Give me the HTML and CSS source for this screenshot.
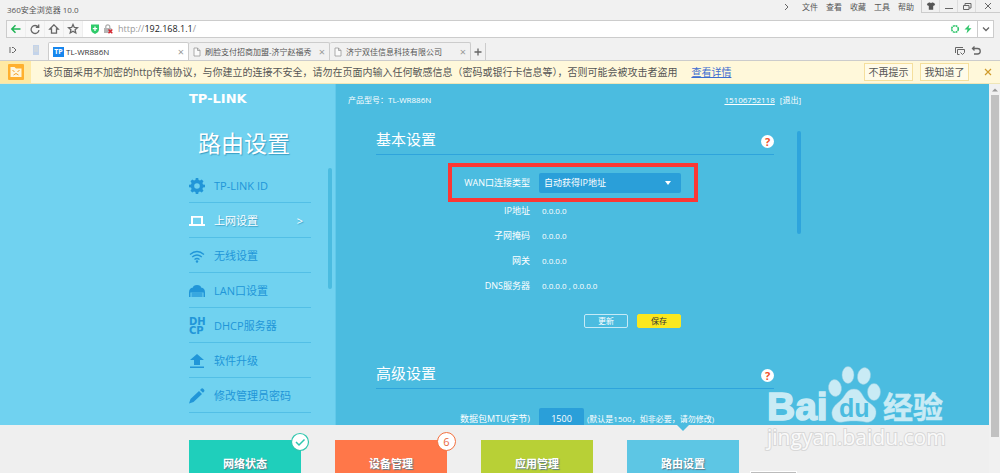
FILE: index.html
```html
<!DOCTYPE html>
<html lang="zh-CN">
<head>
<meta charset="utf-8">
<title>TL-WR886N</title>
<link rel="stylesheet" href="styles.css">
</head>
<body>
<header class="chrome">
  <div class="titlebar">
    <span class="app-name">360安全浏览器 10.0</span>
    <nav class="app-menu">
      <svg class="ico-6" viewBox="0 0 6 8"><path d="M1 1l3 3-3 3" class="line"/></svg>
      <button>文件</button><button>查看</button><button>收藏</button><button>工具</button><button>帮助</button>
    </nav>
    <div class="window-buttons">
      <button aria-label="皮肤"><svg viewBox="0 0 10 10" class="ico-10"><path d="M3 1.500h1l1 .8 1-.8h1L9.200 3 8 5l-.8-.5v4.200H2.800V4.500L2 5 .8 3z" fill="#555"/></svg></button>
      <button aria-label="最小化"><svg viewBox="0 0 10 10" class="ico-10"><path d="M1 7.500h8" class="line"/></svg></button>
      <button aria-label="还原"><svg viewBox="0 0 10 10" class="ico-10"><path d="M1.500 4.500h5.500v4H1.500zM3 4.500V2.500h6v4.500H7" class="line"/></svg></button>
      <button aria-label="关闭"><svg viewBox="0 0 10 10" class="ico-10"><path d="M2 2l6 6M8 2L2 8" class="line"/></svg></button>
    </div>
  </div>
  <div class="addressbar">
    <button class="nav-btn" aria-label="后退"><svg viewBox="0 0 12 12" class="ico-12"><path d="M10.500 6H2M5.500 2.200L1.800 6l3.700 3.800" fill="none" stroke="#1fb455" stroke-width="1.500"/></svg></button>
    <button class="nav-btn" aria-label="刷新"><svg viewBox="0 0 12 12" class="ico-12"><path d="M9.200 4A4 4 0 1 0 10 7.200M9.700 1.500v2.900H6.800" class="line thick"/></svg></button>
    <button class="nav-btn" aria-label="主页"><svg viewBox="0 0 12 12" class="ico-12"><path d="M6 1.800L1.800 6h1.700v4.200h5V6h1.700z" class="line thick"/></svg></button>
    <button class="nav-btn" aria-label="收藏"><svg viewBox="0 0 12 12" class="ico-12"><path d="M6 1.500l1.300 2.900 3.200.3-2.400 2.100.7 3.200L6 8.300 3.200 10l.7-3.200L1.500 4.700l3.200-.3z" class="line thick"/></svg></button>
    <svg viewBox="0 0 10 12" class="shield"><path d="M1 1.500h8v5C9 9 6.500 10.300 5 11 3.500 10.300 1 9 1 6.500z" fill="#2fcb6a"/><path d="M5 3.500v4.500M2.800 5.700h4.400" stroke="#fff" stroke-width="1.300"/></svg>
    <svg viewBox="0 0 10 12" class="shield"><path d="M2.800 5V3.800a2 2 0 0 1 4 0V5" fill="none" stroke="#aaa" stroke-width="1.200"/><path d="M1 5h7.500v5H1z" fill="#b5b5b5"/><path d="M5.500 6.500l3.800 3.800m0-3.800l-3.800 3.800" stroke="#d9232e" stroke-width="1.400"/></svg>
    <span class="url">http://<b>192.168.1.1</b>/</span>
    <svg viewBox="0 0 10 10" class="ico-10"><circle cx="5" cy="5" r="3.300" fill="none" stroke="#2fc56a" stroke-width="1.600" stroke-dasharray="2 .6"/></svg>
    <svg viewBox="0 0 10 10" class="ico-10 bolt"><path d="M6.500.5L1.500 5.500h3L3.500 9.500l5-5.300h-3z" fill="#2fc56a"/></svg>
    <button class="drop-btn" aria-label="展开"><svg viewBox="0 0 10 10" class="ico-10"><path d="M2 3.500l3 3 3-3" class="line thick"/></svg></button>
  </div>
  <div class="tabs">
    <svg viewBox="0 0 10 10" class="ico-10 side-toggle"><path d="M2 2v6M4 2.500h1.500L8 5 5.500 7.500H4" class="line"/></svg>
    <svg viewBox="0 0 8 12" class="phone"><path d="M1 1h6v10H1z" fill="#c3d3ea"/><path d="M2 3h4M2 5h4M2 7h4" stroke="#dcdcd6"/></svg>
    <div class="tab active"><span class="tp">TP</span><span class="tab-name">TL-WR886N</span><button aria-label="关闭标签">×</button></div>
    <div class="tab"><svg viewBox="0 0 8 10" class="doc"><path d="M1 1h3.500L7 3.500V9H1zM4.500 1v2.500H7"/></svg><span class="tab-name">刷脸支付招商加盟-济宁赵福秀</span><button aria-label="关闭标签">×</button></div>
    <div class="tab"><svg viewBox="0 0 8 10" class="doc"><path d="M1 1h3.500L7 3.500V9H1zM4.500 1v2.500H7"/></svg><span class="tab-name">济宁双佳信息科技有限公司</span><button aria-label="关闭标签">×</button></div>
    <button class="new-tab" aria-label="新标签"><svg viewBox="0 0 10 10" class="ico-10"><path d="M5 1.500v7M1.500 5h7" class="line thick"/></svg></button>
    <div class="tab-tools">
      <svg viewBox="0 0 12 12" class="ico-12"><path d="M1.500 8V2.500h7.500M5.500 9.500h-2v-5h7v3M6.500 7.500l2 2 2-2" class="line"/></svg>
      <svg viewBox="0 0 12 12" class="ico-12"><path d="M4.500 1.500L2.500 3.500l2 2M2.500 3.500h5a2.700 2.700 0 0 1 0 5.500H4" class="line thick"/></svg>
    </div>
  </div>
  <div class="notice">
    <span class="notice-mark"><svg viewBox="0 0 16 16" class="ico-16"><rect width="16" height="16" rx="1" fill="#ffb02e"/><path d="M2.500 3h4l1.500 1.500h5.500V13h-11z" fill="#fff7dd"/><path d="M4.500 6.500l2 1M11.500 6.500l-2 1M5.500 11q2.500-3 5 0" fill="none" stroke="#f3a029"/></svg></span>
    <p>该页面采用不加密的http传输协议，与你建立的连接不安全，请勿在页面内输入任何敏感信息（密码或银行卡信息等），否则可能会被攻击者盗用</p>
    <a href="#">查看详情</a>
    <div class="notice-actions"><button>不再提示</button><button>我知道了</button>
    <button class="notice-close" aria-label="关闭"><svg viewBox="0 0 10 10" class="ico-10"><path d="M2 2l6 6M8 2L2 8" stroke="#cf9b2c" stroke-width="1.200"/></svg></button></div>
  </div>
</header>

<div class="viewport">
  <div class="page">
    <div class="panel">
      <aside class="sidebar">
        <div class="logo">TP-LINK</div>
        <h1>路由设置</h1>
        <ul class="menu">
          <li><a href="#"><svg viewBox="0 0 16 16" class="ico-16"><path fill-rule="evenodd" d="M6.800 0h2.400l.4 2 1.400.6L12.700 1.500l1.800 1.800L13.400 5l.6 1.400 2 .4v2.400l-2 .4-.6 1.400 1.100 1.700-1.800 1.800L11 13.400l-1.400.6-.4 2H6.800l-.4-2L5 13.400l-1.700 1.100-1.800-1.800L2.600 11 2 9.600l-2-.4V6.800l2-.4L2.600 5 1.500 3.300l1.800-1.800L5 2.600 6.400 2zM8 5.200a2.800 2.800 0 1 0 0 5.600 2.800 2.800 0 0 0 0-5.600z"/></svg>TP-LINK ID</a></li>
          <li class="current"><a href="#"><svg viewBox="0 0 16 16" class="ico-16"><path fill-rule="evenodd" d="M2 3h12v8h2v2H0v-2h2zM4 4.800V11h8V4.800z"/></svg>上网设置<span class="more">&gt;</span></a></li>
          <li><a href="#"><svg viewBox="0 0 16 16" class="ico-16"><path d="M1 6.500q7-6 14 0M3.200 9q4.800-4 9.600 0M5.500 11.500q2.500-2 5 0" fill="none" stroke="currentColor" stroke-width="1.300"/><circle cx="8" cy="13.500" r="1.200"/></svg>无线设置</a></li>
          <li><a href="#"><svg viewBox="0 0 16 16" class="ico-16"><path d="M4 4.500Q4 2 8 2t4 2.500q4 .5 4 5V14h-1.500V9.500h-13V14H0V9.500q0-4.500 4-5z"/><path d="M2.500 9.500h11V14h-11z" opacity=".7"/></svg>LAN口设置</a></li>
          <li><a href="#"><span class="dhcp-icon"><span>DH</span><span>CP</span></span>DHCP服务器</a></li>
          <li><a href="#"><svg viewBox="0 0 16 16" class="ico-16"><path d="M8 1l7 6h-4v5H5V7H1zM1 13.500h14V15H1z"/></svg>软件升级</a></li>
          <li><a href="#"><svg viewBox="0 0 16 16" class="ico-16"><path d="M0 15.500L1.500 11 10 3l3 3-8.500 8zM11 2l1.500-1.500q1-.5 2 .5t1 2L14 4.800z"/></svg>修改管理员密码</a></li>
        </ul>
        <div class="side-scroll"></div>
      </aside>
      <main class="content">
        <div class="account"><span>产品型号：TL-WR886N</span><span class="user"><a href="#">15106752118</a><a href="#" class="plain">[退出]</a></span></div>
        <div class="settings">
          <div class="forms">
            <section>
              <header class="section-head"><h2>基本设置</h2><button class="help" aria-label="帮助">?</button></header>
              <form class="form">
                <div class="row wan"><label for="wan">WAN口连接类型</label>
                  <span class="select-wrap"><select id="wan"><option>自动获得IP地址</option></select><svg viewBox="0 0 6 4" class="caret"><path d="M0 0h6L3 4z" fill="#fff"/></svg></span>
                  <span class="highlight"></span></div>
                <div class="row"><span>IP地址</span><output>0.0.0.0</output></div>
                <div class="row"><span>子网掩码</span><output>0.0.0.0</output></div>
                <div class="row"><span>网关</span><output>0.0.0.0</output></div>
                <div class="row"><span>DNS服务器</span><output>0.0.0.0 , 0.0.0.0</output></div>
                <div class="buttons"><button type="button">更新</button><button type="button" class="save">保存</button></div>
              </form>
            </section>
            <section>
              <header class="section-head"><h2>高级设置</h2><button class="help" aria-label="帮助">?</button></header>
              <form class="form mtu">
                <div class="row"><label for="mtu">数据包MTU(字节)</label><span class="mtu-field"><input id="mtu" value="1500"><small>(默认是1500，如非必要，请勿修改)</small></span></div>
              </form>
            </section>
          </div>
          <div class="content-scroll"></div>
        </div>
      </main>
    </div>
    <nav class="dock">
      <a href="#" class="tile teal">网络状态<svg viewBox="0 0 20 20" class="badge"><circle cx="10" cy="10" r="8.500" fill="#fff" stroke="#2fc6ae" stroke-width="1.200"/><path d="M6 10l3 3 5.500-5.500" fill="none" stroke="#2fc6ae" stroke-width="1.500"/></svg></a>
      <a href="#" class="tile orange">设备管理<span class="badge count">6</span></a>
      <a href="#" class="tile green">应用管理</a>
      <a href="#" class="tile blue">路由设置<svg viewBox="0 0 12 6" class="pointer"><path d="M0 0h12L6 6z" fill="#4bbce0"/></svg></a>
    </nav>
    <div class="status-edge"></div>
    <svg class="watermark" viewBox="0 0 184 90">
      <g class="mark">
        <text x="2" y="57" class="wm-bai">Bai</text>
        <ellipse cx="70" cy="25" rx="6.500" ry="8.500" transform="rotate(-8 70 25)"/>
        <ellipse cx="83" cy="12" rx="6" ry="8.500"/>
        <ellipse cx="99" cy="13" rx="6.500" ry="8.500" transform="rotate(12 99 13)"/>
        <ellipse cx="109" cy="29" rx="6.500" ry="8.500"/>
        <path d="M89 26c-8 0-9 8-14 12s-9 8-8 14 6 8 11 7 7-1 11-1 7 0 11 1 10-1 11-8-4-9-9-13-5-12-13-12z"/>
        <text x="118" y="55" class="wm-exp">经验</text>
      </g>
      <text x="74" y="54" class="wm-du">du</text>
      <text x="2" y="82" class="wm-url">jingyan.baidu.com</text>
    </svg>
  </div>
  <div class="page-scroll"><svg viewBox="0 0 8 6" class="up"><path d="M1 4.500L4 1.500l3 3z" fill="#999"/></svg><div class="thumb"></div></div>
</div>
</body>
</html>
```
FILE: styles.css
```css
* { box-sizing: border-box; }
body {
  margin: 0;
  height: 100vh;
  display: flex;
  flex-direction: column;
  overflow: hidden;
  font: 8px/12px "Open Sans", "Noto Sans CJK SC", sans-serif;
  color: #555;
  background: #f1f1f1;
}
button {
  font: inherit;
  color: inherit;
  border: 0;
  padding: 0;
  background: none;
  display: flex;
  align-items: center;
  justify-content: center;
}
a { color: inherit; text-decoration: none; }
svg { display: block; flex: none; fill: currentColor; }
.line { fill: none; stroke: #666; stroke-width: 1; }
.thick { stroke-width: 1.3; }
.ico-6 { width: 6px; height: 8px; }
.ico-10 { width: 10px; height: 10px; }
.ico-12 { width: 12px; height: 12px; }
.ico-16 { width: 16px; height: 16px; }

/* browser frame */
.titlebar { display: flex; height: 20px; padding-left: 7px; }
.app-name { margin-right: auto; line-height: 20px; }
.app-menu { display: flex; align-items: center; gap: 8px; height: 13px; margin-right: 7px; }
.app-menu svg { margin-right: 4px; }
.window-buttons { display: flex; height: 13px; border-left: 1px solid #ccc; border-bottom: 1px solid #ccc; }
.window-buttons button { width: 18px; border-right: 1px solid #ddd; }
.window-buttons button:last-child { width: 24px; border: 0; }
.addressbar {
  display: flex;
  align-items: center;
  height: 18px;
  margin: 0 6px;
  background: #fff;
  border: 1px solid #ccc;
}
.nav-btn { width: 19px; height: 16px; background: #f7f7f7; border-right: 1px solid #eee; }
.shield { width: 10px; height: 12px; margin-left: 3px; }
.nav-btn + .shield { margin-left: 7px; }
.url { flex: 1; margin-left: 5px; font-size: 9px; color: #999; }
.url b { font-weight: 400; color: #222; }
.bolt { margin: 0 4px 0 3px; }
.drop-btn { width: 16px; height: 16px; border-left: 1px solid #ccc; }
.tabs { display: flex; align-items: flex-end; height: 23px; padding-left: 8px; border-bottom: 1px solid #ccc; }
.side-toggle { margin-bottom: 5px; }
.phone { width: 8px; height: 12px; margin: 0 12px 4px 14px; }
.tab {
  display: flex;
  align-items: center;
  flex: 0 1 141px;
  height: 18px;
  padding: 0 4px;
  border: 1px solid #ccc;
  border-bottom: 0;
  border-left-width: 0;
  border-radius: 2px 2px 0 0;
}
.tab.active { background: #fff; color: #333; border-left-width: 1px; margin-left: -4px; }
.tab.active .tab-name { margin-left: 2px; font-size: 8px; }
.tab-name { margin: 0 auto 0 4px; white-space: nowrap; }
.tab button { color: #999; font-size: 11px; }
.tp { background: #1686ee; color: #fff; font-size: 7px; line-height: 10px; font-weight: 700; width: 11px; text-align: center; }
.doc { width: 8px; height: 10px; fill: #fafafa; stroke: #999; stroke-width: .8; }
.new-tab { width: 15px; height: 17px; border-right: 1px solid #ccc; }
.tab-tools { display: flex; gap: 4px; margin: 0 18px 3px auto; }
.notice {
  display: flex;
  align-items: center;
  height: 23px;
  font-size: 10px;
  color: #555;
  background: #fff8da;
  border-bottom: 1px solid #efe6b8;
}
.notice-mark { width: 31px; height: 22px; padding: 3px 8px; background: #ffe9a3; }
.notice p { margin: 0 14px 0 12px; white-space: nowrap; }
.notice > a { color: #3d6cd0; text-decoration: underline; white-space: nowrap; }
.notice-actions { display: flex; gap: 7px; margin-left: auto; padding-right: 7px; }
.notice-actions button { width: 49px; height: 18px; border: 1px solid #f5df9d; background: #fffbe8; white-space: nowrap; }
.notice-actions .notice-close { width: 10px; margin-left: 7px; background: none; border: 0; }

/* router page */
.viewport { flex: 1; min-height: 0; display: flex; }
.page { flex: 1; min-width: 0; position: relative; display: flex; flex-direction: column; background: #efefef; }
.panel { flex: 1; min-height: 0; display: flex; overflow: hidden; background: #4bbce0; color: #fff; }
.sidebar {
  position: relative;
  width: 336px;
  flex: none;
  padding: 7px 24px 0 189px;
  background: #70d2f0;
  border-right: 1px solid #62c9ea;
}
.logo { font: 700 13px/16px "DejaVu Sans", sans-serif; height: 36px; }
h1 {
  margin: 0 0 9px 9px;
  font-size: 23px;
  line-height: 32px;
  font-weight: 400;
  text-shadow: 1px 1px 1px #3a9fc4;
}
.menu { margin: 0; padding: 0; list-style: none; font-size: 11px; color: #2196d8; }
.menu li { height: 35px; border-bottom: 1px solid #52bfe6; }
.menu a { display: flex; align-items: center; gap: 9px; height: 34px; padding-top: 2px; white-space: nowrap; }
.menu .current { color: #fff; text-shadow: 1px 1px 1px #3a9fc4; }
.more { margin: 0 8px 0 auto; }
.dhcp-icon { width: 16px; display: grid; font: 700 10px/9px "DejaVu Sans", sans-serif; }
.dhcp-icon span { height: 9px; }
.side-scroll { position: absolute; right: 3px; top: 84px; width: 4px; height: 121px; border-radius: 2px; background: #4bbce0; }
.content { flex: 1; min-width: 0; padding: 10px 188px 0 12px; }
.account { display: flex; justify-content: space-between; height: 33px; }
.user { display: flex; gap: 5px; }
.user a { text-decoration: underline; }
.user .plain { text-decoration: none; }
.settings { display: flex; justify-content: space-between; padding-left: 28px; }
.forms { flex: 1; margin-right: 23px; }
.content-scroll { width: 4px; height: 103px; margin-top: 4px; border-radius: 2px; background: #2ea4dc; }
.section-head { display: flex; justify-content: space-between; align-items: flex-start; height: 28px; border-bottom: 1px solid #2ea4dc; }
h2 { margin: 0; font-size: 15px; line-height: 24px; font-weight: 400; }
.help { width: 13px; height: 13px; margin-top: 8px; border-radius: 50%; background: #fff; color: #f2502a; font-size: 11px; font-weight: 700; }
.form { padding-top: 13px; }
.row { position: relative; display: grid; grid-template-columns: 154px 1fr; column-gap: 9px; align-items: center; height: 25px; }
.row > :first-child { font-size: 9px; text-align: right; white-space: nowrap; }
.row.wan { height: 30px; }
output { padding-left: 3px; }
.select-wrap { position: relative; width: 142px; }
select {
  display: block;
  appearance: none;
  width: 100%;
  height: 20px;
  padding: 0 5px;
  border: 0;
  border-radius: 2px;
  background: #2a9fd9;
  color: #fff;
  font: inherit;
  font-size: 9px;
}
.caret { position: absolute; right: 10px; top: 8px; width: 6px; height: 4px; }
.highlight { position: absolute; left: 72px; top: -5px; width: 250px; height: 39px; border: 4px solid #fb3735; }
.buttons { display: flex; gap: 9px; padding: 16px 0 33px 208px; }
.buttons button { width: 44px; height: 14px; border: 1px solid #c6eaf6; border-radius: 2px; }
.buttons .save { background: #fbe81f; border-color: #fbe81f; color: #333; }
.form.mtu { padding-top: 17px; }
.mtu-field { display: flex; align-items: center; gap: 3px; }
input { width: 45px; height: 21px; padding: 0; border: 0; border-radius: 2px; background: #2a9fd9; color: #fff; font: inherit; font-size: 9px; text-align: center; }
small { font-size: 8px; white-space: nowrap; }

.dock { flex: none; display: flex; gap: 34px; height: 48px; padding: 15px 0 0 189px; }
.tile { position: relative; width: 112px; height: 33px; padding-top: 15px; color: #fff; font-size: 11px; line-height: 18px; font-weight: 700; text-align: center; text-shadow: 1px 1px 1px #5a7a8a; }
.teal { background: #1fcfbb; }
.orange { background: #ff7749; }
.green { background: #b8d036; }
.blue { background: #5dc6e4; }
.badge { position: absolute; right: -9px; top: -8px; width: 20px; height: 20px; }
.count { width: 19px; height: 19px; border: 1px solid #f4713f; border-radius: 50%; background: #fff; color: #e8683c; font-weight: 400; line-height: 17px; text-shadow: none; }
.pointer { position: absolute; left: 50px; top: -15px; width: 12px; height: 6px; }
.status-edge { position: absolute; right: 192px; bottom: 0; width: 47px; height: 2px; background: #bbb; border: 1px solid #fff; border-bottom: 0; }

.watermark { position: absolute; right: 40px; bottom: 20px; width: 184px; height: 90px; overflow: visible; }
.mark { fill: #c9ebf5; stroke: #8fcbe0; stroke-width: .5; }
.mark .wm-bai { font: 700 39px "Liberation Sans", sans-serif; stroke: #c9ebf5; stroke-width: 1.5; }
.mark .wm-exp { font: 700 30px "Noto Sans CJK SC", sans-serif; stroke: #c9ebf5; }
.wm-du { font: 700 25px "Liberation Sans", sans-serif; fill: #4bbce0; }
.wm-url { font: 21px "Open Sans", sans-serif; fill: #fafafa; stroke: #d8d8d8; stroke-width: 2; paint-order: stroke; }
.page-scroll { width: 11px; flex: none; display: flex; flex-direction: column; align-items: center; background: #f1f1f1; }
.up { width: 8px; height: 6px; margin: 3px 0 2px; }
.thumb { width: 8px; height: 342px; background: #c1c1c1; }
```
